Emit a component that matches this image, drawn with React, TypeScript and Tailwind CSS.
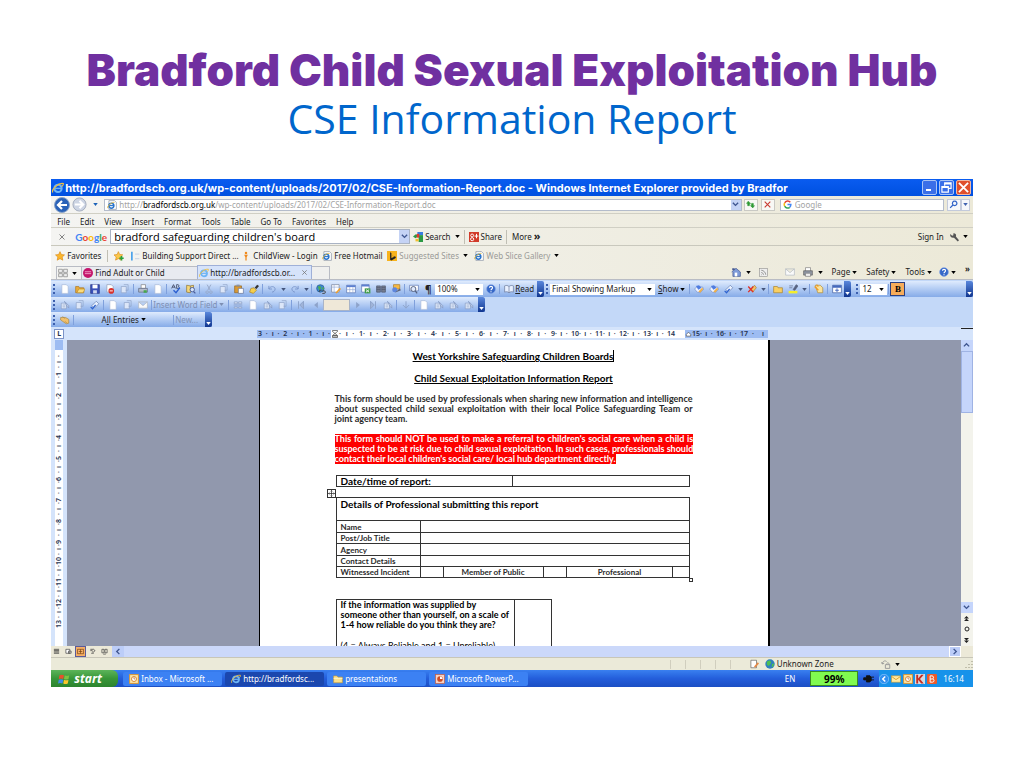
import React from 'react';

const icons: Record<string, React.ReactNode> = {
  ie: (
    <>
      <circle cx="8" cy="8.5" r="4.8" fill="none" stroke="#6db4f5" strokeWidth="2.8" />
      <path d="M4 8.5h9" stroke="#6db4f5" strokeWidth="2" />
      <path d="M1 14C-1 10 8 1 15 2c1 1-1 3-2 4" fill="none" stroke="#f0c040" strokeWidth="1.5" />
    </>
  ),
  iePage: (
    <>
      <path d="M3 1h9l3 3v11H3z" fill="#fff" stroke="#7c8798" />
      <circle cx="7" cy="9" r="4" fill="none" stroke="#2773cc" strokeWidth="2.4" />
      <path d="M4 9h7" stroke="#2773cc" strokeWidth="1.8" />
      <path d="M1 13C0 9 8 3 12 4" fill="none" stroke="#e5b93a" strokeWidth="1.4" />
    </>
  ),
  star: <path d="M8 1l2.2 4.6 5 .6-3.7 3.5 1 5L8 12.2 3.5 14.7l1-5L.8 6.2l5-.6z" fill="#fbb62c" stroke="#d98613" />,
  starAdd: (
    <>
      <path d="M7 1l2 4.5 5 .6-3.7 3.5 1 5L7 12.2 2.5 14.6l1-5L0 6.2l5-.6z" fill="#fbc84a" stroke="#d98613" />
      <path d="M12 8v7M8.5 11.5h7" stroke="#2aa13a" strokeWidth="2.6" />
    </>
  ),
  listBar: (
    <>
      <path d="M3 1v14" stroke="#3c9bea" strokeWidth="2.5" />
      <path d="M8 5h7M8 12h7" stroke="#cfd8e6" strokeWidth="2" />
    </>
  ),
  person: (
    <>
      <circle cx="8" cy="3" r="2" fill="#f08a1c" />
      <path d="M5 6h6l-2 4v5H7v-5z" fill="#f08a1c" />
    </>
  ),
  bing: (
    <>
      <rect width="16" height="16" fill="#f8b31c" />
      <path d="M5 2l2 1v8l5-2-4-2 6 2v2l-7 4-2-1z" fill="#222" />
    </>
  ),
  gSearch: (
    <>
      <rect x="7" width="9" height="5" fill="#3a7de0" />
      <rect x="9" y="5" width="7" height="11" fill="#2c9a45" />
      <path d="M0 7l5-4 3 4-4 3z" fill="#2c9a45" />
      <path d="M6 3h4v6H6z" fill="#e3392d" />
      <path d="M4 11h5v4H4z" fill="#f3c02c" />
    </>
  ),
  gPlus: (
    <>
      <rect width="16" height="16" fill="#d13b2a" />
      <circle cx="5" cy="5.5" r="2.3" fill="none" stroke="#fff" strokeWidth="1.5" />
      <circle cx="5" cy="11.5" r="2.5" fill="none" stroke="#fff" strokeWidth="1.5" />
      <path d="M12 3v7M9 6.5h6" stroke="#fff" strokeWidth="1.6" />
    </>
  ),
  g: (
    <>
      <path d="M13 4A6 6 0 0 0 3 5" fill="none" stroke="#e34335" strokeWidth="2.6" />
      <path d="M3 5a6 6 0 0 0 0 6" fill="none" stroke="#f7bb14" strokeWidth="2.6" />
      <path d="M3 11a6 6 0 0 0 9 2" fill="none" stroke="#34a553" strokeWidth="2.6" />
      <path d="M8 8h6c0 2-1 4-2 5" fill="none" stroke="#4285f4" strokeWidth="2.6" />
    </>
  ),
  wrench: <path d="M2 3l3 3 2-1 0-3c4 0 5 3 4 5l5 6-2 2-6-6C4 10 1 7 2 3z" fill="#555" />,
  home: (
    <>
      <path d="M1 8l7-6 7 6v7H3V8" fill="#7f9bd8" stroke="#3c4f86" />
      <rect x="6" y="9" width="4" height="6" fill="#fff" />
      <path d="M2 2h4v3H2z" fill="#46598f" />
    </>
  ),
  rss: (
    <>
      <rect x="1" y="1" width="14" height="14" fill="#eee" stroke="#888" />
      <path d="M4 12h1M4 8c2 0 4 2 4 4M4 4c4 0 8 4 8 8" fill="none" stroke="#888" strokeWidth="1.5" />
    </>
  ),
  mail: <path d="M1 3h14v10H1zM1 3l7 6 7-6" fill="#fafafa" stroke="#aeb4bd" />,
  printer: (
    <>
      <path d="M4 1h8v6H4z" fill="#fff" stroke="#777" />
      <path d="M1 6h14v7H1z" fill="#8f96a3" stroke="#555" />
      <path d="M4 10h8v5H4z" fill="#eee" stroke="#777" />
    </>
  ),
  help: (
    <>
      <circle cx="8" cy="8" r="7" fill="#3668c8" stroke="#7fa1e6" />
      <path d="M5.5 6c0-3 5-3 5 0 0 2-2.5 1.8-2.5 4M8 11.5v1.5" fill="none" stroke="#fff" strokeWidth="1.8" />
    </>
  ),
  pinkBall: (
    <>
      <circle cx="8" cy="8" r="8" fill="#c4166c" />
      <path d="M3 6h10M3 9h10" stroke="#f09cc4" strokeWidth="1.5" />
    </>
  ),
  quad: <path d="M1 2h6v5H1zM9 2h6v5H9zM1 9h6v5H1zM9 9h6v5H9z" fill="#eee" stroke="#777" />,
  page: <path d="M3 1h7l3 3v11H3z" fill="#fff" stroke="#a9b9d6" />,
  folder: (
    <>
      <path d="M1 4h5l1 2h7v8H1z" fill="#e8a93a" stroke="#a8741c" />
      <path d="M3 14l3-6h10l-3 6z" fill="#fbdc7c" stroke="#b98a2a" />
    </>
  ),
  taskFolder: (
    <>
      <path d="M1 3h5l2 2h7v9H1z" fill="#fbe08a" stroke="#c99a34" />
      <path d="M1 7h14" stroke="#fff3c4" strokeWidth="1.5" />
    </>
  ),
  save: (
    <>
      <path d="M1 1h14v14H1z" fill="#3b50b8" stroke="#25307c" />
      <rect x="4" y="1" width="8" height="6" fill="#fff" />
      <rect x="5" y="10" width="6" height="5" fill="#cfd6ee" />
    </>
  ),
  noEntry: (
    <>
      <path d="M3 1h7l3 3v9H3z" fill="#fff" stroke="#8b97b0" />
      <circle cx="10" cy="11" r="4.5" fill="#d9302a" />
      <path d="M7.5 11h5" stroke="#fff" strokeWidth="1.5" />
    </>
  ),
  greyDoc: (
    <>
      <path d="M2 4h8v10H2z" fill="#dce6f8" stroke="#8c9fc4" />
      <path d="M6 1h7v9H9" fill="none" stroke="#8c9fc4" />
    </>
  ),
  printColor: (
    <>
      <path d="M5 1h7v6H5z" fill="#fff" stroke="#777" />
      <path d="M1 7h14v6H1z" fill="#b5bccb" stroke="#555f77" />
      <path d="M9 10h5v4H9z" fill="#46a84c" />
    </>
  ),
  spell: (
    <>
      <path d="M1 7L4 1l3 6M2 5h4M9 1v6h3c2-1 1-3 0-3 1 0 1-3-1-3z" fill="none" stroke="#3b4560" strokeWidth="1.3" />
      <path d="M4 10l4 4 6-8" fill="none" stroke="#2b5fd0" strokeWidth="2.2" />
    </>
  ),
  research: (
    <>
      <path d="M1 2l6 1v11l-6-1zM7 3l5-1v8" fill="#f5d77a" stroke="#866a24" />
      <circle cx="10" cy="9" r="3.5" fill="#d6e4fb" stroke="#4c5f99" strokeWidth="1.5" />
      <path d="M12 12l3 3" stroke="#4c5f99" strokeWidth="2" />
    </>
  ),
  cut: <path d="M5 1l5 9M11 1L6 10M5 11a2 2 0 1 0 .1 0M11 11a2 2 0 1 0 .1 0" fill="none" stroke="#96a7c6" strokeWidth="1.5" />,
  paste: (
    <>
      <path d="M1 3h11v11H1z" fill="#d99a34" stroke="#8c601b" />
      <path d="M4 1h5v3H4z" fill="#8b93a5" />
      <path d="M7 7h8v8H7z" fill="#fff" stroke="#5b6b93" />
    </>
  ),
  painter: (
    <>
      <path d="M9 6l4-5 3 2-4 5z" fill="#333" />
      <path d="M3 7l5-1 4 4-5 5-6-2z" fill="#f5cf4d" stroke="#a57c20" />
    </>
  ),
  undo: <path d="M3 3v5h5M3 8c3-6 10-4 10 0 0 3-3 5-5 5" fill="none" stroke="#7f9ace" strokeWidth="1.6" />,
  redo: <path d="M13 3v5H8M13 8C10 2 3 4 3 8c0 3 3 5 5 5" fill="none" stroke="#7f9ace" strokeWidth="1.6" />,
  globe: (
    <>
      <circle cx="7" cy="7" r="6" fill="#3d86d0" stroke="#22598f" />
      <path d="M3 4l4-1 1 4-3 3zM9 5l4 1-2 4z" fill="#4cb04c" />
      <path d="M6 13a2 2 0 0 1 0-3h3M10 15h3a2 2 0 0 0 0-4h-3" fill="none" stroke="#444" strokeWidth="1.5" />
    </>
  ),
  table: (
    <>
      <path d="M1 2h14v12H1z" fill="#fff" stroke="#4a66ac" />
      <path d="M1 2h14v3H1z" fill="#5b7fd0" />
      <path d="M1 9h14M6 5v9M11 5v9" stroke="#8ea5d6" />
    </>
  ),
  tablePen: (
    <>
      <path d="M1 1h12v12H1z" fill="#fff" stroke="#6d7890" />
      <path d="M1 5h12M5 1v12" stroke="#8ea5d6" />
      <path d="M7 14l7-8 2 2-7 7z" fill="#f0a02c" />
    </>
  ),
  excel: (
    <>
      <path d="M1 1h12v12H1z" fill="#fff" stroke="#4a66ac" />
      <path d="M1 1h12v3H1z" fill="#5b7fd0" />
      <rect x="6" y="7" width="9" height="8" fill="#3f9a48" />
      <path d="M8 9l5 4M13 9l-5 4" stroke="#fff" strokeWidth="1.4" />
    </>
  ),
  columns: <path d="M1 3h6v10H1zM9 3h6v10H9zM1 6h6M1 9h6M9 6h6M9 9h6" fill="#7b8395" stroke="#414a60" />,
  drawing: (
    <>
      <path d="M4 1h10v7H4z" fill="#f7ba45" stroke="#a8741c" />
      <circle cx="6" cy="9" r="4" fill="#5f86dc" />
      <path d="M6 14l8-7 2 3z" fill="#5c6478" />
    </>
  ),
  docMap: (
    <>
      <path d="M1 2h14v9H1z" fill="#fff" stroke="#4a66ac" />
      <circle cx="7" cy="8" r="4" fill="#dfeaff" stroke="#55617e" strokeWidth="1.5" />
      <path d="M10 11l3 4" stroke="#55617e" strokeWidth="2" />
    </>
  ),
  book: <path d="M8 4C6 2 3 2 1 3v10c2-1 5-1 7 1 2-2 5-2 7-1V3c-2-1-5-1-7 1zM8 4v10" fill="#e8f0ff" stroke="#5d6b8d" />,
  change: (
    <>
      <path d="M1 8l4-4 9 1 1 4-5 5-5-1z" fill="#eef3ff" stroke="#6a84c4" />
      <path d="M3 3l5-1 4 4-5 3z" fill="#4f7ce0" />
      <path d="M7 12l6-6 2 2-5 6z" fill="#efb04a" />
    </>
  ),
  accept: (
    <>
      <path d="M3 9l7-7 4 4-7 7z" fill="#e9f1ff" stroke="#5c73a8" />
      <path d="M1 11l3 3 5-6" fill="none" stroke="#2f63cf" strokeWidth="2" />
    </>
  ),
  reject: (
    <>
      <path d="M6 9l6-7 3 4-6 7z" fill="#f3c368" stroke="#a2752b" />
      <path d="M2 4l8 9M10 4l-8 9" stroke="#df3127" strokeWidth="2.2" />
    </>
  ),
  note: <path d="M1 4h6l1 2h7v8H1z" fill="#f9cf62" stroke="#a27a24" />,
  highlight: (
    <>
      <path d="M1 11h14v4H1z" fill="#f4ee2a" />
      <path d="M2 3h6M2 6h5M8 9l5-8 3 2-5 7z" fill="#56627f" stroke="#56627f" />
    </>
  ),
  track: (
    <>
      <path d="M2 2h8l4 4v8H6z" fill="#fbe39a" stroke="#a8842f" />
      <path d="M1 4l6 6M4 1l3 3" stroke="#ef9a25" strokeWidth="2" />
    </>
  ),
  pane: (
    <>
      <path d="M1 2h14v12H1z" fill="#fff" stroke="#2e4d98" />
      <path d="M1 2h14v4H1z" fill="#4469bd" />
      <path d="M8 7v6M5 10h6" stroke="#4469bd" strokeWidth="1.5" />
    </>
  ),
  merge: (
    <>
      <path d="M2 5h8v9H2z" fill="#e3ecfb" stroke="#8195bd" />
      <path d="M4 8h4M4 11h4" stroke="#8195bd" />
      <path d="M7 2l7 7v4l-3-3z" fill="#b6c7e6" stroke="#8195bd" />
    </>
  ),
  hand: <path d="M1 4h8l5 3v6l-4 1-6-4-3-2zM4 2l4 4M8 10l3 3" fill="#f1c06c" stroke="#a8843a" />,
  first: <path d="M4 2v12M12 2L6 8l6 6z" fill="#9fb3d8" stroke="#8ea3ca" strokeWidth="1.5" />,
  prev: <path d="M11 3L5 8l6 5z" fill="#8ea3ca" />,
  next: <path d="M5 3l6 5-6 5z" fill="#8ea3ca" />,
  last: <path d="M12 2v12M4 2l6 6-6 6z" fill="#9fb3d8" stroke="#8ea3ca" strokeWidth="1.5" />,
  down: <path d="M8 2v11M3 8l5 5 5-5" fill="none" stroke="#8ea3ca" strokeWidth="1.5" />,
  fields: <path d="M2 3h5v3H2zM9 3h5v3H9zM1 8h14M2 11h5v2H2zM9 11h5v2H9z" fill="#dce6f8" stroke="#8195bd" />,
  view: <path d="M2 3h12M2 6h12M2 9h12M2 12h12" stroke="#3b3b3b" strokeWidth="1.8" />,
  webView: <path d="M2 3h9v9H2zM8 7h6v5H8z" fill="#fff" stroke="#3b3b3b" strokeWidth="1.5" />,
  printView: <path d="M1 3h14v10H1zM8 3v10M4 8h8" fill="none" stroke="#7a4514" strokeWidth="1.6" />,
  outline: <path d="M3 3h8c3 2 3 4 0 6H7M3 6h5M5 12h6" fill="none" stroke="#3b3b3b" strokeWidth="1.6" />,
  readView: <path d="M2 3h5v8H2zM9 3h5v8H9zM5 14h6" fill="none" stroke="#3b3b3b" strokeWidth="1.5" />,
  indent: <path d="M3 1h10v2L8 7l5 4H3l5-4-5-4zM3 12h10v3H3z" fill="#fff" stroke="#444" strokeWidth="1.4" />,
  indentRight: <path d="M3 14v-4l5-5 5 5v4z" fill="#fff" stroke="#444" strokeWidth="1.4" />,
  move: <path d="M8 1v14M1 8h14M6 3l2-2 2 2M6 13l2 2 2-2M3 6L1 8l2 2M13 6l2 2-2 2" fill="none" stroke="#222" strokeWidth="1.6" />,
  clip: (
    <>
      <path d="M3 2h9v12H3z" fill="#fff" stroke="#555" />
      <path d="M8 12l6-7 2 2-6 7z" fill="#e58a48" />
    </>
  ),
  world: (
    <>
      <circle cx="8" cy="8" r="7.5" fill="#2f7fc0" />
      <path d="M3 4l5-2 2 4-4 5-3-2zM11 8l4-1-2 5-2 1z" fill="#4fbf52" />
    </>
  ),
  lock: <path d="M2 8c1-5 4-6 7-4M2 8L1 5M2 8l3-1M7 9h7v6H7zM9 9c0-4 4-4 4 0" fill="none" stroke="#999" strokeWidth="1.5" />,
  flag: (
    <>
      <path d="M2 3c2-1 4-1 6 0L7 8c-2-1-4-1-6 0z" fill="#e8502c" />
      <path d="M9 3c2 1 4 1 6 0l-1 5c-2 1-4 1-6 0z" fill="#7dc242" />
      <path d="M1 9c2-1 4-1 6 0l-1 5c-2-1-4-1-6 0z" fill="#3f8be8" />
      <path d="M8 9c2 1 4 1 6 0l-1 5c-2 1-4 1-6 0z" fill="#fbc62b" />
    </>
  ),
  outlook: (
    <>
      <rect x="1" y="1" width="14" height="14" fill="#fbe6a8" stroke="#e0952b" strokeWidth="1.5" />
      <circle cx="8" cy="8" r="4" fill="#fff" stroke="#d6802a" strokeWidth="1.5" />
      <path d="M8 5v3h2" fill="none" stroke="#a8561a" />
    </>
  ),
  powerpoint: (
    <>
      <rect x="1" y="1" width="14" height="14" fill="#f8d2c2" stroke="#d2572e" />
      <circle cx="8" cy="8" r="4.5" fill="#cf4a22" />
      <path d="M8 8V4a4 4 0 0 1 4 4z" fill="#fff" />
    </>
  ),
  plug: <path d="M1 7h4V4h5l2 2v5l-2 2H5v-3H1zM12 6h4M12 10h4" fill="#111" stroke="#111" strokeWidth="1.3" />,
  envelope: (
    <>
      <rect x="1" y="3" width="14" height="10" fill="#ffe9a3" stroke="#d8a12e" />
      <path d="M1 4l7 5 7-5" fill="none" stroke="#d8a12e" strokeWidth="1.5" />
    </>
  ),
  trayK: (
    <>
      <rect width="16" height="16" fill="#d8dbe0" />
      <path d="M2 1h3v6l5-6h4L8 8l6 7h-4L5 9v6H2z" fill="#c62c22" />
    </>
  ),
  trayB: (
    <>
      <rect width="16" height="16" rx="2" fill="#ef5a28" />
      <path d="M5 3v10h4c3 0 3-5 0-5 2-1 2-5-1-5zM5 8h4" fill="none" stroke="#fff" strokeWidth="1.6" />
    </>
  ),
  chevron: (
    <>
      <circle cx="8" cy="8" r="7.5" fill="#2f8ff0" stroke="#9bd0ff" />
      <path d="M10 4L6 8l4 4" fill="none" stroke="#fff" strokeWidth="2.4" />
    </>
  ),
  magnifier: <path d="M10 2a4 4 0 1 0 .1 0M7 9l-5 5" fill="none" stroke="#2f62c8" strokeWidth="2.2" />,
  refresh: <path d="M4 2L1 6h2v4h3V6h2zM12 14l3-4h-2V6h-3v4H8zM5 7h3M9 9h3" fill="#2f9a35" stroke="#2f9a35" />,
  stop: <path d="M3 3l10 10M13 3L3 13" stroke="#c83a32" strokeWidth="2" />,
  close: <path d="M3 3l10 10M13 3L3 13" stroke="#777" strokeWidth="1.8" />,
  back: (
    <>
      <circle cx="8" cy="8" r="7.5" fill="#2a62b8" stroke="#8ba4c8" />
      <path d="M13 8H4M8 4L4 8l4 4" fill="none" stroke="#fff" strokeWidth="2.2" />
    </>
  ),
  forward: (
    <>
      <circle cx="8" cy="8" r="7" fill="#cdd5e4" stroke="#a3acbd" />
      <path d="M3 8h9M8 4l4 4-4 4" fill="none" stroke="#fff" strokeWidth="2.2" />
    </>
  ),
};

const Icon = ({ name, className = 'size-[10px]' }: { name: string; className?: string }) => (
  <svg viewBox="0 0 16 16" aria-hidden="true" className={`shrink-0 ${className}`}>
    {icons[name]}
  </svg>
);

const Arrow = ({ className = 'text-black' }: { className?: string }) => (
  <svg viewBox="0 0 6 4" aria-hidden="true" className={`h-[3px] w-[5px] shrink-0 ${className}`}>
    <path d="M0 0h6L3 4z" fill="currentColor" />
  </svg>
);

const Chevron = ({ d }: { d: string }) => (
  <svg viewBox="0 0 8 8" aria-hidden="true" className="size-[7px]">
    <path d={d} fill="none" stroke="#3f5690" strokeWidth="1.6" />
  </svg>
);

const Sep = () => <span className="mx-px h-[10px] w-px shrink-0 bg-[#7fa0dc]" />;
const Grip = () => <span className="mx-[2px] h-[10px] shrink-0 border-l-2 border-dotted border-[#3c5fae]" />;

const ToolbarEnd = () => (
  <button aria-label="Toolbar options" className="flex h-full w-[7px] shrink-0 items-end justify-center rounded-r-xs bg-gradient-to-b from-[#5a87dc] to-[#10358f] pb-[2px]">
    <Arrow className="text-white" />
  </button>
);

// '|' is a separator, 'v' a drop-down arrow, anything else an icon button
const Tools = ({ items }: { items: string[] }) => (
  <>
    {items.map((item, i) => {
      if (item === '|') return <Sep key={i} />;
      if (item === 'v') return <span key={i} className="flex w-[8px] shrink-0 justify-center"><Arrow className="text-[#44557c]" /></span>;
      return (
        <button key={i} aria-label={item} className="flex w-[15px] shrink-0 justify-center">
          <Icon name={item} />
        </button>
      );
    })}
  </>
);

const Select = ({ label, value, className }: { label: string; value: string; className: string }) => (
  <span className={`flex h-[11px] shrink-0 items-center bg-white pr-[3px] ${className}`}>
    <select aria-label={label} className="min-w-0 flex-1 appearance-none pl-[2px] outline-none">
      <option>{value}</option>
    </select>
    <Arrow />
  </span>
);

const favourites = [
  { icon: 'listBar', text: 'Building Support Direct ...', width: 'w-[111px]' },
  { icon: 'person', text: 'ChildView - Login', width: 'w-[81px]' },
  { icon: 'iePage', text: 'Free Hotmail', width: 'w-[65px]' },
  { icon: 'bing', text: 'Suggested Sites', width: 'w-[87px]', menu: true },
  { icon: 'iePage', text: 'Web Slice Gallery', width: 'w-[90px]', menu: true },
];

const tasks = [
  { icon: 'outlook', text: 'Inbox - Microsoft ...', active: false },
  { icon: 'ie', text: 'http://bradfordsc...', active: true },
  { icon: 'taskFolder', text: 'presentations', active: false },
  { icon: 'powerpoint', text: 'Microsoft PowerP...', active: false },
];

const BrowserBars = () => (
  <div className="bg-gradient-to-r from-[#f4f4f2] to-[#ece9d8]">
    <div className="flex h-[18px] items-center border-b border-[#d0cfc4] pr-[3px]">
      <button aria-label="Back" className="ml-[3px]"><Icon name="back" className="size-[16px]" /></button>
      <button aria-label="Forward" className="ml-[2px]"><Icon name="forward" className="size-[15px]" /></button>
      <span className="mx-[4px] flex w-[9px] justify-center"><Arrow className="text-[#1a62b8]" /></span>
      <div className="flex h-[12px] flex-1 items-center border border-[#b4bccb] bg-white pl-[2px]">
        <Icon name="iePage" />
        <span className="flex-1 pl-[2px] text-[#a3a3a3]">
          http://<span className="text-black">bradfordscb.org.uk</span>/wp-content/uploads/2017/02/CSE-Information-Report.doc
        </span>
        <button aria-label="Show addresses" className="flex h-full w-[10px] items-center justify-center bg-[#c5d3f5]">
          <Chevron d="M1 2l3 3 3-3" />
        </button>
      </div>
      <button aria-label="Refresh" className="ml-[2px] flex h-[12px] w-[14px] items-center justify-center border border-[#c9c9c4] bg-[#f8f8f5]"><Icon name="refresh" className="size-[9px]" /></button>
      <button aria-label="Stop" className="ml-[3px] flex h-[12px] w-[14px] items-center justify-center border border-[#c9c9c4] bg-[#f8f8f5]"><Icon name="stop" className="size-[9px]" /></button>
      <label className="ml-[5px] flex h-[12px] w-[164px] items-center border border-[#b4bccb] bg-white pl-[2px]">
        <Icon name="g" className="size-[9px]" />
        <input aria-label="Search the web" placeholder="Google" className="min-w-0 flex-1 pl-[3px] outline-none placeholder:text-[#a3a3a3]" />
      </label>
      <button aria-label="Search" className="ml-[3px] flex h-[12px] w-[14px] items-center justify-center border border-[#c3cadb] bg-[#f5f7fb]"><Icon name="magnifier" className="size-[9px]" /></button>
      <button aria-label="Search options" className="flex h-[12px] w-[9px] items-center justify-center border border-[#c3cadb] bg-[#f5f7fb]"><Arrow className="text-[#3f62b0]" /></button>
    </div>

    <nav className="flex h-[14px] items-end gap-[10px] border-b border-[#d0cfc4] pl-[6px]">
      {['File', 'Edit', 'View', 'Insert', 'Format', 'Tools', 'Table', 'Go To', 'Favorites', 'Help'].map((item) => (
        <button key={item}>{item}</button>
      ))}
    </nav>

    <div className="flex h-[18px] items-center border-b border-[#c9c8bd]">
      <button aria-label="Close toolbar" className="ml-[7px] mr-[9px]"><Icon name="close" className="size-[8px]" /></button>
      <span className="w-[35px] font-['Lato',sans-serif] text-[10px] font-bold">
        <span className="text-[#4285f4]">G</span>
        <span className="text-[#ea4335]">o</span>
        <span className="text-[#fbbc05]">o</span>
        <span className="text-[#4285f4]">g</span>
        <span className="text-[#34a853]">l</span>
        <span className="text-[#ea4335]">e</span>
      </span>
      <div className="flex h-[15px] w-[300px] border border-[#a9b3c4] bg-white">
        <input aria-label="Google search" defaultValue="bradford safeguarding children's board" className="min-w-0 flex-1 pl-[3px] font-['Open_Sans',sans-serif] text-[11px] text-black outline-none" />
        <button aria-label="Show searches" className="flex w-[10px] items-center justify-center bg-[#c5d3f5]"><Chevron d="M1 2l3 3 3-3" /></button>
      </div>
      <button className="ml-[3px] flex items-center gap-[2px]"><Icon name="gSearch" />Search</button>
      <span className="ml-[4px]"><Arrow /></span>
      <span className="mx-[4px] h-[14px] w-px bg-[#c0bfb4]" />
      <button className="flex items-center gap-[2px]"><Icon name="gPlus" />Share</button>
      <span className="mx-[4px] h-[14px] w-px bg-[#c0bfb4]" />
      <button className="ml-px">More <b className="text-[11px]">»</b></button>
      <button className="ml-auto">Sign In</button>
      <button aria-label="Settings" className="mx-[5px] flex items-center gap-[4px]"><Icon name="wrench" /><Arrow /></button>
    </div>

    <div className="flex h-[19px] items-center pl-[4px]">
      <button className="flex items-center gap-[2px]"><Icon name="star" />Favorites</button>
      <span className="mx-[6px] h-[12px] w-px bg-[#c0bfb4]" />
      <button aria-label="Add to favorites" className="mr-[6px]"><Icon name="starAdd" /></button>
      {favourites.map((f) => (
        <a key={f.text} href="#" className={`flex shrink-0 items-center gap-[2px] whitespace-nowrap ${f.width} ${f.menu ? 'text-[#9b9b98]' : ''}`}>
          <Icon name={f.icon} className="size-[10px]" />
          {f.text}
          {f.menu && <span className="ml-[2px]"><Arrow /></span>}
        </a>
      ))}
    </div>

    <div className="flex h-[15px] items-end border-b border-[#b9bcc4]">
      <button aria-label="Quick tabs" className="ml-[5px] flex h-[13px] items-center gap-[4px] border border-b-0 border-[#b9bcc4] pl-px pr-[4px]"><Icon name="quad" /><Arrow /></button>
      <button className="flex h-[13px] w-[115px] items-center gap-[2px] border-t border-[#b9bcc4] bg-[#e8eaf0] pl-px"><Icon name="pinkBall" />Find Adult or Child</button>
      <div className="flex h-[14px] w-[115px] items-center border border-b-0 border-[#9fb0d8] bg-[#d6e3fa] pl-px">
        <button className="flex flex-1 items-center gap-px"><Icon name="ie" />http://bradfordscb.or...</button>
        <button aria-label="Close tab" className="mr-[3px]"><Icon name="close" className="size-[7px]" /></button>
      </div>
      <button aria-label="New tab" className="h-[13px] w-[18px] border border-b-0 border-l-0 border-[#b9bcc4] bg-[#f0f0ee]" />
      <div className="ml-auto flex h-full items-center pr-[3px]">
        <button aria-label="Home" className="flex items-center gap-[5px]"><Icon name="home" /><Arrow /></button>
        <button aria-label="Feeds" className="ml-[8px]"><Icon name="rss" className="size-[9px]" /></button>
        <button aria-label="Mail" className="ml-[17px]"><Icon name="mail" /></button>
        <button aria-label="Print" className="ml-[8px] flex items-center gap-[5px]"><Icon name="printer" /><Arrow /></button>
        {['Page', 'Safety', 'Tools'].map((item) => (
          <button key={item} className="ml-[9px] flex items-center gap-[2px]">{item}<Arrow /></button>
        ))}
        <button aria-label="Help" className="ml-[7px] flex items-center gap-[2px]"><Icon name="help" /><Arrow /></button>
        <button aria-label="More commands" className="ml-[9px] self-start font-bold leading-[8px]">»</button>
      </div>
    </div>
  </div>
);

const barStyle = 'flex h-[15px] items-center bg-gradient-to-b from-[#dfebfd] to-[#86abe8]';

const WordBars = () => (
  <div className="bg-[#c3d8f8] pt-px">
    <div className={`${barStyle} h-[16px]`}>
      <Grip />
      <Tools items={['page', 'folder', 'save', 'noEntry', 'greyDoc', '|', 'printColor', 'page', '|', 'spell', 'research', '|', 'cut', 'greyDoc', 'paste', 'painter', '|', 'undo', 'v', 'redo', 'v', '|', 'globe', 'tablePen', 'table', 'excel', 'columns', 'drawing', '|', 'docMap']} />
      <button aria-label="Show marks" className="w-[14px] shrink-0 text-[10px] font-bold">¶</button>
      <Select label="Zoom" value="100%" className="w-[48px]" />
      <Tools items={['help', '|']} />
      <button className="mx-[3px] flex shrink-0 items-center gap-px"><Icon name="book" /><span><u>R</u>ead</span></button>
      <ToolbarEnd />
      <Grip />
      <Select label="Display for review" value="Final Showing Markup" className="w-[105px]" />
      <button className="mx-[3px] flex shrink-0 items-center gap-[2px]"><span><u>S</u>how</span><Arrow /></button>
      <Tools items={['|', 'change', 'change', 'accept', 'v', 'reject', 'v', '|', 'note', 'highlight', 'v', '|', 'track', '|', 'pane']} />
      <ToolbarEnd />
      <span className="w-[3px]" />
      <Grip />
      <Select label="Font size" value="12" className="w-[27px]" />
      <Sep />
      <button className="flex h-[14px] w-[15px] items-center justify-center border border-[#2b3f80] bg-[#f7ac5a] font-['Liberation_Serif',serif] text-[9px] font-bold text-black">B</button>
      <span className="flex-1" />
      <ToolbarEnd />
    </div>
    <div className={`${barStyle} w-[434px]`}>
      <Grip />
      <Tools items={['merge', 'greyDoc', 'accept', '|', 'page', 'greyDoc', 'mail', '|']} />
      <button className="mr-[3px] flex shrink-0 items-center gap-[2px] text-[#7d8fb3]">Insert Word Field<Arrow className="text-[#7d8fb3]" /></button>
      <Tools items={['|', 'fields', 'page', 'merge', 'greyDoc', '|', 'first', 'prev']} />
      <input aria-label="Go to record" className="h-[12px] w-[27px] shrink-0 border border-[#a9b4c8] bg-[#efe8d8]" />
      <Tools items={['next', 'last', 'merge', '|', 'down', '|', 'page', 'merge', 'merge', 'merge']} />
      <span className="flex-1" />
      <ToolbarEnd />
    </div>
    <div className={`${barStyle} w-[161px]`}>
      <Grip />
      <Tools items={['hand', '|']} />
      <button className="flex flex-1 items-center justify-center gap-[2px]"><span>A<u>l</u>l Entries</span><Arrow /></button>
      <Sep />
      <button className="w-[30px] text-left text-[#8193b8]">New...</button>
      <ToolbarEnd />
    </div>
  </div>
);

const Ticks = ({ items }: { items: string[] }) => (
  <>
    {items.map((n) => (
      <span key={n} className="flex w-[24px] shrink-0 justify-between whitespace-nowrap">
        <span>·</span><span>ı</span><span>·</span><span>{n}</span>
      </span>
    ))}
  </>
);

const range = (from: number, to: number) => Array.from({ length: to - from + 1 }, (_, i) => String(from + i));

const Ruler = () => (
  <div className="flex h-[13px] items-center bg-[#d5e4fb] pl-[3px] text-[7px] font-semibold leading-[7px] text-[#26324f]">
    <span className="flex size-[10px] items-center justify-center border border-[#7c93c8] bg-white font-bold">L</span>
    <div className="flex flex-1 justify-center">
      <div className="flex h-[8px] w-[511px] items-center bg-white">
        <div className="flex h-full w-[74px] items-center justify-between bg-[#9dbcf2] px-px">
          {'3·ı·2·ı·1·ı·'.split('').map((c, i) => <span key={i}>{c}</span>)}
        </div>
        <Icon name="indent" className="h-[12px] w-[8px]" />
        <div className="flex"><Ticks items={range(1, 14)} /></div>
        <div className="ml-[10px] flex h-full flex-1 items-center bg-[#9dbcf2]">
          <Icon name="indentRight" className="size-[7px]" />
          <span>15</span><Ticks items={['16', '17']} />
          <span className="flex flex-1 justify-around"><span>·</span><span>ı</span></span>
        </div>
      </div>
    </div>
    <span className="h-[2px] w-[12px] self-start border-b border-[#222]" />
  </div>
);

const details = ['Name', 'Post/Job Title', 'Agency', 'Contact Details'];
const cell = 'border border-[#333] px-[4px] py-0';
const line = 'block whitespace-nowrap [text-align-last:justify]';

const Report = () => (
  <article className="mx-auto h-full w-[511px] shrink-0 border-l border-r-2 border-black bg-white px-[75px] pt-[11px] font-['Lato',sans-serif] text-[9px] font-bold leading-[10px] text-[#2b2b2b]">
    <h2 className="text-center text-[10px] leading-[11px] text-black underline"><span className="border-r border-black">West Yorkshire Safeguarding Children Boards</span></h2>
    <h3 className="mt-[11px] text-center text-[10px] leading-[11px] text-black underline">Child Sexual Exploitation Information Report</h3>
    <p className="mt-[10px]">
      <span className={line}>This form should be used by professionals when sharing new information and intelligence</span>
      <span className={line}>about suspected child sexual exploitation with their local Police Safeguarding Team or</span>
      <span className="block">joint agency team.</span>
    </p>
    <p className="mt-[10px] w-fit text-white">
      <span className={`${line} bg-[#fe0000]`}>This form should NOT be used to make a referral to children's social care when a child is</span>
      <span className={`${line} w-max min-w-full bg-[#fe0000]`}>suspected to be at risk due to child sexual exploitation. In such cases, professionals should</span>
      <span className="block w-fit bg-[#fe0000]">contact their local children's social care/ local hub department directly.</span>
    </p>
    <table className="ml-px mt-[11px] w-[354px] border-collapse text-[10px] text-black">
      <tbody>
        <tr className="h-[11px]"><th scope="row" className={`${cell} w-1/2 text-left`}>Date/time of report:</th><td className={cell} /></tr>
      </tbody>
    </table>
    <div className="relative ml-px mt-[10px] w-[354px]">
      <span className="absolute -left-[9px] -top-[8px] flex size-[9px] items-center justify-center border border-[#333] bg-white"><Icon name="move" className="size-[7px]" /></span>
      <table className="w-full table-fixed border-collapse text-[8px]">
        <colgroup>
          <col className="w-[84px]" />
          <col className="w-[23px]" />
          <col className="w-[100px]" />
          <col className="w-[23px]" />
          <col />
          <col className="w-[16px]" />
        </colgroup>
        <tbody>
          <tr className="h-[23px]"><th colSpan={6} className={`${cell} text-left align-top text-[10px] leading-[13px] text-black`}>Details of Professional submitting this report</th></tr>
          {details.map((d) => (
            <tr key={d} className="h-[11px] even:h-[12px]">
              <th scope="row" className={`${cell} whitespace-nowrap text-left`}>{d}</th>
              <td colSpan={5} className={cell} />
            </tr>
          ))}
          <tr className="h-[11px]">
            <th scope="row" className={`${cell} whitespace-nowrap text-left`}>Witnessed Incident</th>
            <td className={cell} />
            <th className={cell}>Member of Public</th>
            <td className={cell} />
            <th className={cell}>Professional</th>
            <td className={cell} />
          </tr>
        </tbody>
      </table>
      <span className="absolute -bottom-[4px] -right-[3px] size-[4px] border border-[#333] bg-white" />
    </div>
    <table className="ml-px mt-[21px] w-[216px] table-fixed border-collapse text-black">
      <tbody>
        <tr>
          <td className={`${cell} w-[178px] whitespace-nowrap`}>
            If the information was supplied by<br />
            someone other than yourself, on a scale of<br />
            1-4 how reliable do you think they are?
            <p className="mt-[11px] font-normal">(4 = Always Reliable and 1 = Unreliable)</p>
          </td>
          <td className={cell} />
        </tr>
      </tbody>
    </table>
  </article>
);

const DocumentPane = () => (
  <div className="flex h-[306px] overflow-hidden">
    <div className="flex w-[16px] justify-center bg-[#d5e4fb]">
      <div className="flex w-[8px] flex-col bg-white text-[7px] font-semibold leading-[8px] text-[#26324f]">
        <span className="mb-[5px] h-[10px] shrink-0 bg-[#9dbcf2]" />
        {range(1, 13).map((n) => (
          <span key={n} className="flex h-[21px] w-[8px] shrink-0 rotate-180 justify-between [writing-mode:vertical-rl]">
            <span>{n}</span><span>·</span><span>ı</span><span>·</span>
          </span>
        ))}
      </div>
    </div>
    <div className="flex flex-1 bg-[#9198ad]"><Report /></div>
    <div className="flex w-[12px] flex-col items-center bg-[#f3f3ec]">
      <div className="flex h-[11px] w-full items-center justify-center bg-[#c5d5fb]"><Chevron d="M1 5l3-3 3 3" /></div>
      <div className="h-[62px] w-full border border-[#9fb3e4] bg-[#c5d5fb]" />
      <div className="mt-auto flex h-[11px] w-full items-center justify-center bg-[#c5d5fb]"><Chevron d="M1 2l3 3 3-3" /></div>
      <div className="flex h-[33px] w-full flex-col items-center justify-around text-[#222]">
        <svg viewBox="0 0 6 6" className="size-[5px]"><path d="M0 3l3-3 3 3zM0 6l3-3 3 3z" fill="currentColor" /></svg>
        <svg viewBox="0 0 6 6" className="size-[6px]"><circle cx="3" cy="3" r="2" fill="none" stroke="currentColor" /></svg>
        <svg viewBox="0 0 6 6" className="size-[5px]"><path d="M0 0l3 3 3-3zM0 3l3 3 3-3z" fill="currentColor" /></svg>
      </div>
    </div>
  </div>
);

const App: React.FC = () => {
  return (
    <main className="min-h-screen bg-white pt-[46px]">
      <h1 className="text-center">
        <span className="block whitespace-nowrap font-['Inter',sans-serif] text-[44px] font-black leading-[48px] text-[#7030a0]">Bradford Child Sexual Exploitation Hub</span>
        <span className="block whitespace-nowrap font-['Comic_Sans_MS','Open_Sans',sans-serif] text-[41px] font-normal leading-[48px] text-[#0066cc]">CSE Information Report</span>
      </h1>

      <section className="mx-auto mt-[37px] w-[90%] overflow-hidden font-['Noto_Sans',sans-serif] text-[8px] leading-[10px] text-[#222]">
        <header className="flex h-[17px] items-center bg-gradient-to-b from-[#0a5cf0] to-[#0050e0] pl-px pr-[2px] text-white">
          <Icon name="ie" className="size-[12px]" />
          <span className="flex-1 whitespace-nowrap pl-px font-['Inter',sans-serif] text-[11px] font-bold leading-[16px]">
            http://bradfordscb.org.uk/wp-content/uploads/2017/02/CSE-Information-Report.doc - Windows Internet Explorer provided by Bradfor
          </span>
          <div className="flex gap-[2px]">
            <button aria-label="Minimize" className="flex size-[15px] items-end rounded-xs border border-[#a9c4f5] bg-[#3a6fe8] p-[3px]"><span className="h-[2px] w-[5px] bg-white" /></button>
            <button aria-label="Restore" className="flex size-[15px] items-center justify-center rounded-xs border border-[#a9c4f5] bg-[#3a6fe8]">
              <svg viewBox="0 0 12 12" className="size-[11px]"><path d="M4 4V1h7v6H8M4 2h7M1 5h7v6H1zM1 6h7" fill="none" stroke="#fff" strokeWidth="1.3" /></svg>
            </button>
            <button aria-label="Close" className="flex size-[15px] items-center justify-center rounded-xs border border-[#f0b8a4] bg-[#e0502c]">
              <svg viewBox="0 0 12 12" className="size-[11px]"><path d="M1 1l10 10M11 1L1 11" stroke="#fff" strokeWidth="2" /></svg>
            </button>
          </div>
        </header>

        <BrowserBars />
        <WordBars />
        <Ruler />
        <DocumentPane />

        <div className="flex h-[11px] items-center bg-[#cbd8fa]">
          <div className="flex h-full items-center gap-px bg-[#ece9d8] pr-[2px]">
            {['view', 'webView', 'printView', 'outline', 'readView'].map((v) => (
              <button key={v} aria-label={v} className={`flex h-[11px] w-[11px] items-center justify-center ${v === 'printView' ? 'border border-[#5b5b9a] bg-[#f5ae66]' : ''}`}>
                <Icon name={v} className="size-[7px]" />
              </button>
            ))}
          </div>
          <button aria-label="Scroll left" className="flex h-full w-[12px] items-center justify-center bg-[#bccdf8]"><Chevron d="M5 1L2 4l3 3" /></button>
          <button aria-label="Scroll right" className="ml-auto flex h-full w-[12px] items-center justify-center border border-white bg-[#bccdf8]"><Chevron d="M3 1l3 3-3 3" /></button>
          <span className="h-full w-[12px] bg-[#ece9d8]" />
        </div>

        <div className="flex h-[13px] items-center justify-end border-t border-[#c8c6b8] bg-[#ebead9]">
          {[1, 2, 3, 4, 5].map((n) => <span key={n} className="mr-[14px] h-[9px] w-px bg-[#d0cebe]" />)}
          <span className="ml-[4px]"><Icon name="clip" /></span>
          <span className="ml-[6px] flex w-[116px] items-center gap-[2px]"><Icon name="world" />Unknown Zone</span>
          <Icon name="lock" />
          <span className="ml-[4px] mr-[65px]"><Arrow /></span>
          <svg viewBox="0 0 8 8" className="size-[8px]"><path d="M7 1v1M7 4v1M7 7v1M4 4v1M4 7v1M1 7v1" stroke="#b3b09c" strokeWidth="1.5" /></svg>
        </div>

        <footer className="flex h-[17px] items-center bg-gradient-to-b from-[#3a80f0] via-[#245edb] to-[#1c4fc4] text-white">
          <button className="mr-[5px] flex h-full w-[67px] items-center gap-[4px] rounded-r-md bg-gradient-to-b from-[#5cb45a] via-[#389638] to-[#2c842e] pl-[7px] text-[12px] font-bold italic">
            <Icon name="flag" className="size-[12px]" />start
          </button>
          {tasks.map((t) => (
            <button key={t.text} className={`mr-[3px] flex h-[14px] w-[99px] items-center gap-[2px] rounded-xs pl-[6px] ${t.active ? 'bg-[#1b47ae]' : 'bg-[#3c81f3]'}`}>
              <Icon name={t.icon} />{t.text}
            </button>
          ))}
          <span className="ml-auto mr-[15px]">EN</span>
          <span className="flex h-[15px] w-[48px] items-center justify-center border border-[#3a8a20] bg-[#80fa50] text-[10px] font-bold text-black">99%</span>
          <span className="mx-[5px]"><Icon name="plug" className="size-[11px]" /></span>
          <div className="flex h-full items-center gap-[2px] bg-[#1792ea] pr-[9px]">
            <Icon name="chevron" /><Icon name="envelope" /><Icon name="outlook" /><Icon name="trayK" /><Icon name="trayB" />
            <time className="ml-[4px]">16:14</time>
          </div>
        </footer>
      </section>
    </main>
  );
};

export default App;
